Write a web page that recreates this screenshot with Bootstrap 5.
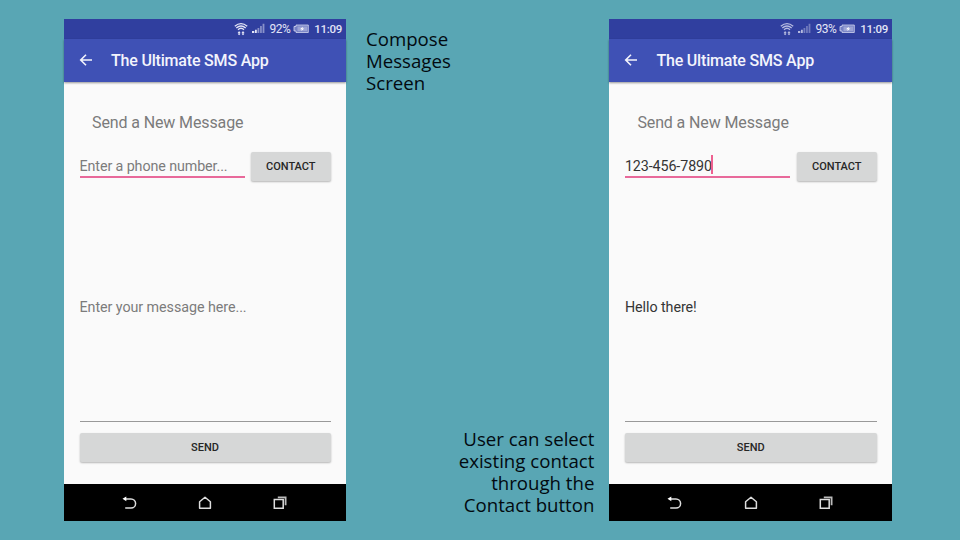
<!DOCTYPE html>
<html lang="en">
<head>
<meta charset="utf-8">
<meta name="viewport" content="width=device-width, initial-scale=1">
<title>The Ultimate SMS App</title>
<link href="https://cdn.jsdelivr.net/npm/bootstrap@5.3.0/dist/css/bootstrap.min.css" rel="stylesheet">
<style>
  body { background: #59a6b4; height: 540px; overflow: hidden; font-family: Roboto, sans-serif; }
  .stage { width: 960px; height: 540px; padding: 19px 68px 19px 64px; }
  .phone { width: 282px; height: 502px; background: #fafafa; }
  .phone.wide { width: 282.6px; }
  .status { height: 19.5px; background: #303f9f; color: #e3e5f6; padding-right: 4px; font-size: 12px; line-height: 20px; }
  .status .pct { margin-left: 4px; letter-spacing: -.45px; }
  .status .batt { margin: 0 5px 0 3px; }
  .status .clock { font-weight: 500; font-size: 11.5px; letter-spacing: -.3px; }
  .appbar { height: 43.5px; background: #3f51b5; color: #f3f4fc; padding-left: 15px; box-shadow: 0 1px 2px rgba(0,0,0,.4); }
  .appbar h1 { font-size: 16px; font-weight: 500; letter-spacing: -.19px; margin: 2px 0 0 18px; line-height: 20px; }
  .screen { padding: 0 15.5px; }
  .heading { font-size: 16px; letter-spacing: -.12px; line-height: 20px; color: #7b7b7b; margin: 31px 0 0 12.5px; }
  .field-row { margin-top: 19px; height: 29px; }
  .field { width: 165.5px; height: 26px; border-bottom: 2px solid #e8699a; font-size: 14.3px; letter-spacing: -.1px; line-height: 28px; color: #7c7c7c; }
  .field.filled, .message.filled { color: #353535; }
  .caret { width: 2px; height: 19px; background: #ee6090; margin-top: 3px; margin-left: -1px; }
  .key { background: #d6d7d7; color: #262626; border-radius: 2px; border: 0; padding: 1px 0 0; height: 29px; font-size: 11px; font-weight: 500; line-height: 28px; box-shadow: 0 1px 2px rgba(0,0,0,.28); }
  .key-contact { width: 79.5px; }
  .message { height: 241px; padding-top: 13px; border-bottom: 1px solid #999; font-size: 14.3px; letter-spacing: -.06px; color: #7c7c7c; }
  .key-send { margin-top: 11px; }
  .navkeys { height: 37.5px; background: #000; padding: 1px 59px 0 58px; }
  .note { font-family: "Open Sans", sans-serif; font-size: 18.65px; line-height: 22px; color: #020a10; margin: 0; }
  .note-top { padding: 9px 0 0 20px; }
  .note-bottom { padding: 0 15px 5px 0; }
</style>
</head>
<body>
<svg class="d-none" aria-hidden="true">
  <symbol id="wifi" viewBox="0 0 14 14">
    <g fill="none" stroke="currentColor" stroke-width="1.4"><path d="M.8 4.2Q7-.9 13.2 4.2M2.3 6Q7 2 11.7 6M4 7.7Q7 5 10 7.7"/></g>
    <path fill="currentColor" d="M5.1 9l1.5 1.9h-.9v.8h.9L5.1 13.2 3.6 11.7h.9v-.8h-.9zM9 9l1.5 1.9h-.9v.8h.9L9 13.2l-1.5-1.5h.9v-.8h-.9z"/>
  </symbol>
  <symbol id="signal" viewBox="0 0 13 11">
    <path fill="currentColor" d="M0 8h2.3v2H0zM3 6.8h1.8V10H3z"/>
    <path fill="currentColor" opacity=".5" d="M5.5 5h1.8v5H5.5zM8.1 3h1.7v7H8.1zM10.6.8h1.8V10h-1.8z"/>
  </symbol>
  <symbol id="battery" viewBox="0 0 16 10">
    <path fill="#7580c4" stroke="currentColor" stroke-opacity=".7" stroke-width="1" d="M3 1h12.3v7.5H3V7H1V2.5h2z"/>
    <path fill="currentColor" opacity=".35" d="M4.5 2.5h9.5v4.7H4.5z"/>
    <path fill="#fff" d="M9.8 2.7L7 5.2h1.8l-.5 1.9 3-2.6H9.5z"/>
  </symbol>
  <symbol id="back" viewBox="0 0 14 14">
    <path fill="none" stroke="currentColor" stroke-width="1.6" d="M13 7H2M7 1.7L1.7 7 7 12.3"/>
  </symbol>
  <symbol id="nav-back" viewBox="0 0 15 14">
    <path fill="none" stroke="#ddd" stroke-width="1.5" d="M2.5 2.9H9a4.6 4.6 0 0 1 0 9.2H3.2"/>
    <path fill="#fff" d="M.5 2.7L4.3.4v4.9z"/>
  </symbol>
  <symbol id="nav-home" viewBox="0 0 14 14">
    <path fill="none" stroke="#ddd" stroke-width="1.5" stroke-linejoin="round" d="M1.6 12.2V5.8L7 1.2l5.4 4.6v6.4z"/>
  </symbol>
  <symbol id="nav-recent" viewBox="0 0 14 14">
    <path fill="none" stroke="#ddd" stroke-width="1.5" d="M1.3 3.6h8.9v8.7H1.3z"/>
    <path fill="none" stroke="#bbb" stroke-width="1.8" d="M4.8 1.4h7.8v7.9"/>
  </symbol>
</svg>

<main class="stage d-flex">
  <section class="phone d-flex flex-column flex-shrink-0">
    <div class="status d-flex align-items-center justify-content-end">
      <svg width="14" height="14"><use href="#wifi"/></svg>
      <svg class="ms-1" width="13" height="11"><use href="#signal"/></svg>
      <span class="pct">92%</span>
      <svg class="batt" width="16" height="10"><use href="#battery"/></svg>
      <span class="clock">11:09</span>
    </div>
    <header class="appbar d-flex align-items-center">
      <svg width="14" height="14"><use href="#back"/></svg>
      <h1 class="text-nowrap">The Ultimate SMS App</h1>
    </header>
    <div class="screen flex-grow-1">
      <div class="heading text-nowrap">Send a New Message</div>
      <div class="field-row d-flex justify-content-between">
        <div class="field text-nowrap">Enter a phone number...</div>
        <button class="key key-contact" type="button">CONTACT</button>
      </div>
      <div class="message d-flex align-items-center">Enter your message here...</div>
      <button class="key key-send w-100 d-block" type="button">SEND</button>
    </div>
    <nav class="navkeys d-flex align-items-center justify-content-between">
      <svg width="15" height="14"><use href="#nav-back"/></svg>
      <svg width="14" height="14"><use href="#nav-home"/></svg>
      <svg width="14" height="14"><use href="#nav-recent"/></svg>
    </nav>
  </section>

  <div class="flex-grow-1 d-flex flex-column justify-content-between">
    <p class="note note-top">Compose<br>Messages<br>Screen</p>
    <p class="note note-bottom text-end">User can select<br>existing contact<br>through the<br>Contact button</p>
  </div>

  <section class="phone wide d-flex flex-column flex-shrink-0">
    <div class="status d-flex align-items-center justify-content-end">
      <svg class="opacity-75" width="14" height="14"><use href="#wifi"/></svg>
      <svg class="ms-1 opacity-75" width="13" height="11"><use href="#signal"/></svg>
      <span class="pct">93%</span>
      <svg class="batt" width="16" height="10"><use href="#battery"/></svg>
      <span class="clock">11:09</span>
    </div>
    <header class="appbar d-flex align-items-center">
      <svg width="14" height="14"><use href="#back"/></svg>
      <h1 class="text-nowrap">The Ultimate SMS App</h1>
    </header>
    <div class="screen flex-grow-1">
      <div class="heading text-nowrap">Send a New Message</div>
      <div class="field-row d-flex justify-content-between">
        <div class="field filled d-flex text-nowrap">123-456-7890<span class="caret"></span></div>
        <button class="key key-contact" type="button">CONTACT</button>
      </div>
      <div class="message filled d-flex align-items-center">Hello there!</div>
      <button class="key key-send w-100 d-block" type="button">SEND</button>
    </div>
    <nav class="navkeys d-flex align-items-center justify-content-between">
      <svg width="15" height="14"><use href="#nav-back"/></svg>
      <svg width="14" height="14"><use href="#nav-home"/></svg>
      <svg width="14" height="14"><use href="#nav-recent"/></svg>
    </nav>
  </section>
</main>
<script src="https://cdn.jsdelivr.net/npm/bootstrap@5.3.0/dist/js/bootstrap.bundle.min.js"></script>
</body>
</html>
